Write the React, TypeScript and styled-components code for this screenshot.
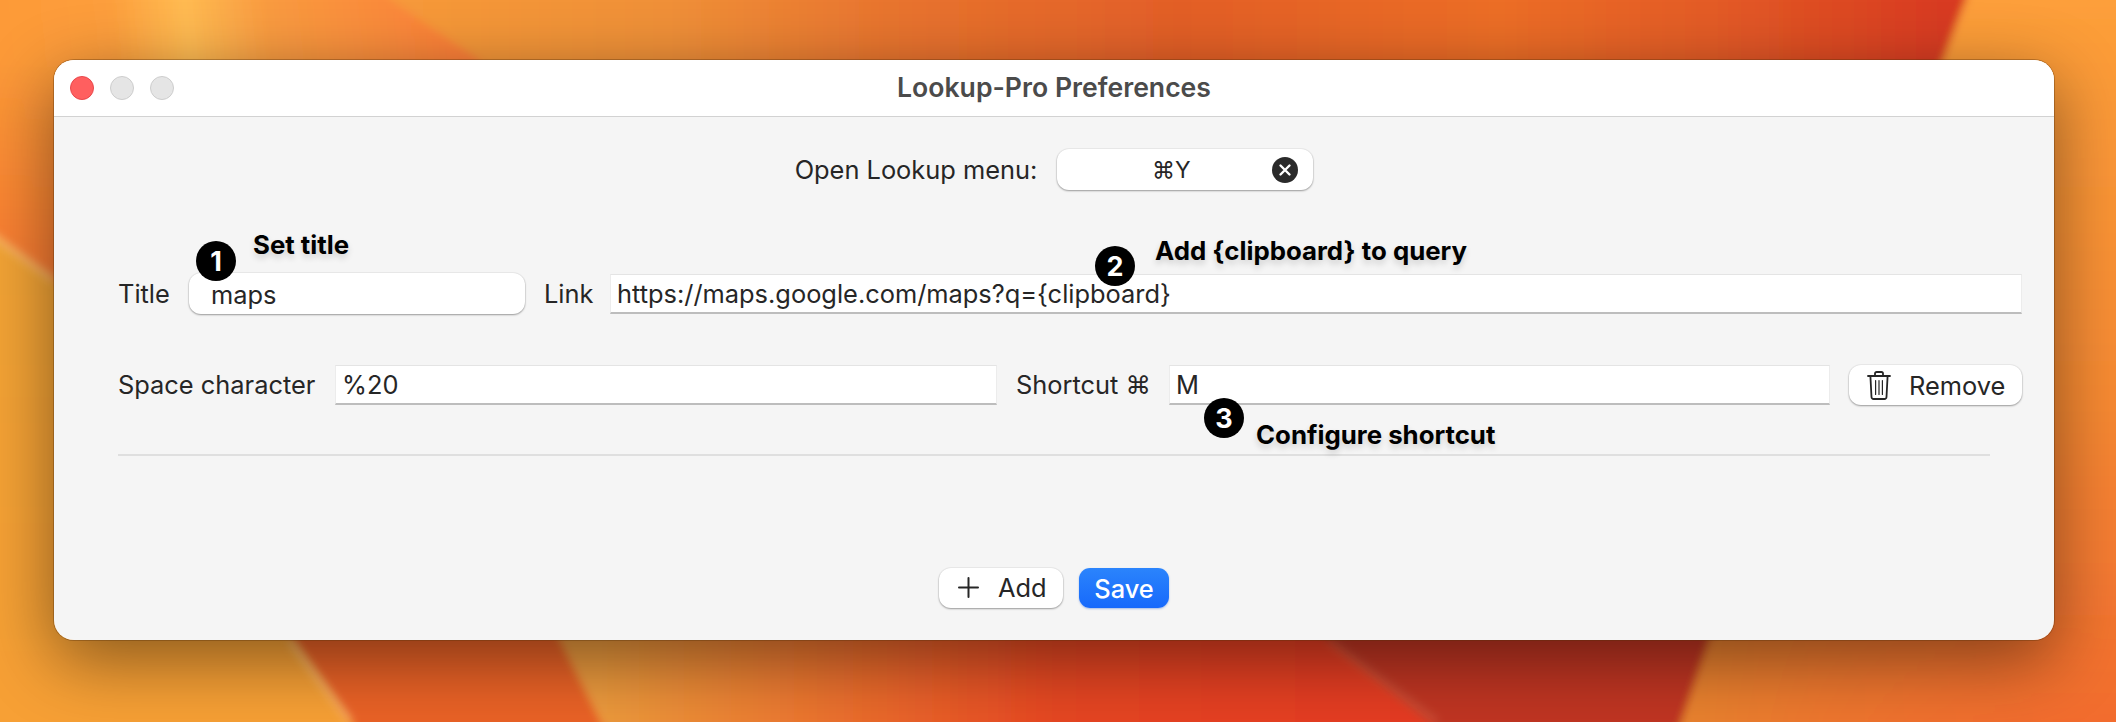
import styled, { createGlobalStyle } from "styled-components";

const GlobalStyle = createGlobalStyle`
  html, body {
    margin: 0;
    padding: 0;
    width: 2116px;
    height: 722px;
    overflow: hidden;
    font-family: Inter, "DejaVu Sans", sans-serif;
  }
  * {
    box-sizing: border-box;
  }
`;

const Page = styled.div`
  position: relative;
  width: 2116px;
  height: 722px;
  padding: 60px 62px 82px 54px;
  overflow: hidden;
  background-color: #f08030;
`;

const WallpaperArt = styled.svg`
  position: absolute;
  inset: 0;
  width: 2116px;
  height: 722px;
`;

const Window = styled.div`
  position: relative;
  display: flex;
  flex-direction: column;
  height: 580px;
  border-radius: 20px;
  overflow: hidden;
  background-color: #f5f5f5;
`;

const WindowShadow = styled.div`
  position: relative;
  border-radius: 20px;
  box-shadow: 0 0 0 1px rgba(90, 50, 10, 0.35), 0 20px 70px rgba(0, 0, 0, 0.46);
`;

const TitleBar = styled.header`
  position: relative;
  display: flex;
  align-items: center;
  justify-content: center;
  height: 57px;
  padding-bottom: 2px;
  flex-shrink: 0;
  background-color: #fff;
  border-bottom: 1px solid #d2d2d2;
`;

const Lights = styled.div`
  position: absolute;
  left: 16px;
  top: 16px;
  display: flex;
  gap: 16px;
`;

const Light = styled.span<{ $close?: boolean }>`
  width: 24px;
  height: 24px;
  border-radius: 50%;
  background-color: ${(p) => (p.$close ? "#ff5f5f" : "#e5e5e5")};
  border: 1px solid ${(p) => (p.$close ? "#e8484c" : "#cdcdcd")};
`;

const WindowTitle = styled.h1`
  margin: 0;
  font-size: 26.6px;
  font-weight: 600;
  color: #4b4b4b;
`;

const Content = styled.main`
  display: flex;
  flex-direction: column;
  flex: 1;
  padding: 32px 32px 32px 64px;
  color: #262626;
  font-size: 25.4px;
`;

const MenuRow = styled.div`
  display: flex;
  align-items: center;
  justify-content: center;
  gap: 20px;
  margin-left: -32px;
`;

const Label = styled.span`
  white-space: nowrap;
  line-height: 40px;
`;

const ShortcutBox = styled.div`
  position: relative;
  display: flex;
  align-items: center;
  justify-content: center;
  width: 256px;
  height: 41px;
  padding-right: 28px;
  background-color: #fff;
  border-radius: 12px;
  box-shadow: 0 1px 2px rgba(0, 0, 0, 0.35), 0 0 0 1px rgba(0, 0, 0, 0.04);
  font-size: 23px;
`;

const ClearIcon = styled.svg`
  position: absolute;
  right: 15px;
  top: 8px;
`;

const FormRow = styled.div<{ $cols: string; $top: number }>`
  display: grid;
  grid-template-columns: ${(p) => p.$cols};
  column-gap: 19px;
  align-items: center;
  margin-top: ${(p) => p.$top}px;
`;

const TitleField = styled.div`
  height: 41px;
  padding-left: 22px;
  line-height: 43px;
  background-color: #fff;
  border-radius: 12px;
  box-shadow: 0 1px 2px rgba(0, 0, 0, 0.35), 0 0 0 1px rgba(0, 0, 0, 0.04);
`;

const TextField = styled.div`
  height: 40px;
  padding-left: 6px;
  line-height: 38px;
  background-color: #fff;
  border: 1px solid #e4e4e4;
  border-bottom: 2px solid #bdbdbd;
  border-left-color: #ececec;
  border-right-color: #ececec;
  white-space: nowrap;
`;

const PlainButton = styled.button`
  display: flex;
  align-items: center;
  height: 40px;
  padding: 0;
  border: 0;
  background-color: #fff;
  border-radius: 12px;
  box-shadow: 0 1px 2px rgba(0, 0, 0, 0.35), 0 0 0 1px rgba(0, 0, 0, 0.04);
  color: #262626;
  font: inherit;
`;

const RemoveButton = styled(PlainButton)`
  gap: 18px;
  width: 173px;
  padding-left: 18px;
`;

const AddButton = styled(PlainButton)`
  gap: 19px;
  width: 124px;
  padding-left: 19px;
  padding-bottom: 2px;
`;

const SaveButton = styled.button`
  width: 90px;
  height: 40px;
  padding: 0;
  border: 0;
  border-radius: 11px;
  background: linear-gradient(#2b84fc, #1769fb);
  box-shadow: 0 1px 2px rgba(20, 80, 200, 0.35);
  color: #fff;
  font: inherit;
  font-weight: 500;
`;

const Divider = styled.hr`
  width: calc(100% - 32px);
  height: 2px;
  margin: 49px 0 0;
  border: 0;
  background-color: #dfdfdf;
`;

const Actions = styled.div`
  display: flex;
  justify-content: center;
  gap: 16px;
  margin-top: auto;
  margin-left: -32px;
`;

const Badge = styled.span<{ $x: number; $y: number }>`
  position: absolute;
  left: ${(p) => p.$x}px;
  top: ${(p) => p.$y}px;
  display: flex;
  align-items: center;
  justify-content: center;
  width: 40px;
  height: 40px;
  border-radius: 50%;
  background-color: #000;
  color: #fff;
  font-size: 27px;
  font-weight: 700;
`;

const Note = styled.span<{ $x: number; $y: number }>`
  position: absolute;
  left: ${(p) => p.$x}px;
  top: ${(p) => p.$y}px;
  line-height: 30px;
  color: #000;
  font-size: 25.800px;
  font-weight: 700;
  white-space: nowrap;
  text-shadow: 0 4px 6px rgba(0, 0, 0, 0.16);
`;

const notes = [
  { n: 1, text: "Set title", bx: 142, by: 181, x: 199, y: 170 },
  { n: 2, text: "Add {clipboard} to query", bx: 1041, by: 186, x: 1101, y: 176 },
  { n: 3, text: "Configure shortcut", bx: 1150, by: 338, x: 1202, y: 360 },
];

function Wallpaper() {
  return (
    <WallpaperArt viewBox="0 0 2116 722" aria-hidden="true">
      <defs>
        <linearGradient id="topBand" gradientUnits="userSpaceOnUse" x1="380" y1="0" x2="1980" y2="0">
          <stop offset="0" stopColor="#f79a3a" />
          <stop offset="0.18" stopColor="#f09038" />
          <stop offset="0.32" stopColor="#e8742e" />
          <stop offset="0.5" stopColor="#e35f28" />
          <stop offset="0.7" stopColor="#ec6e28" />
          <stop offset="0.84" stopColor="#e35a26" />
          <stop offset="0.98" stopColor="#d83a20" />
        </linearGradient>
        <linearGradient id="streak" gradientUnits="userSpaceOnUse" x1="0" y1="0" x2="480" y2="-50">
          <stop offset="0" stopColor="#fd9a38" />
          <stop offset="0.22" stopColor="#fd9e3c" />
          <stop offset="0.38" stopColor="#ffbb52" />
          <stop offset="0.55" stopColor="#f99b40" />
          <stop offset="0.8" stopColor="#fa8a3a" />
          <stop offset="1" stopColor="#ff7a38" />
        </linearGradient>
        <linearGradient id="leftFade" x1="0" y1="0" x2="0" y2="1">
          <stop offset="0" stopColor="#f77a30" stopOpacity="0" />
          <stop offset="1" stopColor="#f7752e" />
        </linearGradient>
        <linearGradient id="yellow" x1="0" y1="0" x2="0" y2="1">
          <stop offset="0" stopColor="#f2a436" />
          <stop offset="1" stopColor="#f8a035" />
        </linearGradient>
        <linearGradient id="emberBand" gradientUnits="userSpaceOnUse" x1="600" y1="0" x2="1437" y2="0">
          <stop offset="0" stopColor="#ec9a3c" />
          <stop offset="0.22" stopColor="#ec7a30" />
          <stop offset="0.55" stopColor="#e64622" />
          <stop offset="1" stopColor="#e53a20" />
        </linearGradient>
        <linearGradient id="rightSide" gradientUnits="userSpaceOnUse" x1="0" y1="0" x2="0" y2="722">
          <stop offset="0" stopColor="#fd9f3a" />
          <stop offset="0.55" stopColor="#f78a33" />
          <stop offset="1" stopColor="#f26c2e" />
        </linearGradient>
        <linearGradient id="rightBottom" gradientUnits="userSpaceOnUse" x1="1680" y1="0" x2="2116" y2="0">
          <stop offset="0" stopColor="#e8832f" />
          <stop offset="1" stopColor="#f26c2e" stopOpacity="0" />
        </linearGradient>
        <filter id="soft" x="-5%" y="-5%" width="110%" height="110%">
          <feGaussianBlur stdDeviation="4" />
        </filter>
        <filter id="glow" x="-20%" y="-20%" width="140%" height="140%">
          <feGaussianBlur stdDeviation="4" />
        </filter>
      </defs>
      <g filter="url(#soft)">
        <rect x="-20" y="-20" width="2160" height="770" fill="url(#topBand)" />
        <polygon points="-20,-20 380,-20 391,0 479,60 640,400 -20,400" fill="url(#streak)" />
        <rect x="-20" y="60" width="120" height="240" fill="url(#leftFade)" />
        <polygon points="1973,-20 2140,-20 2140,740 1670,740 1711,640 1943,60" fill="url(#rightSide)" />
        <polygon points="1711,620 2140,620 2140,740 1670,740" fill="url(#rightBottom)" />
        <polygon points="-20,226 54,280 200,400 278,620 351,722 362,740 -20,740" fill="url(#yellow)" />
        <polygon points="280,620 362,740 610,740 550,620" fill="#ea6226" />
        <polygon points="550,620 610,740 1450,740 1303,620" fill="url(#emberBand)" />
        <polygon points="1303,620 1450,740 1675,740 1716,620" fill="#c03620" />
      </g>
      <g filter="url(#glow)" fill="none" stroke="#ffd9a0" strokeOpacity="0.4" strokeWidth="7">
        <polyline points="-20,226 54,280" />
        <polyline points="290,640 351,722" />
        <polyline points="1329,640 1437,722" strokeOpacity="0.14" />
      </g>
    </WallpaperArt>
  );
}

function TrashIcon() {
  return (
    <svg width="24" height="29" viewBox="0 0 24 29" fill="none" stroke="#262626" strokeWidth="1.8" strokeLinecap="round" strokeLinejoin="round">
      <path d="M1 5h22" />
      <path d="M8 5V2.600C8 1.700 8.700 1 9.600 1h4.800c.9 0 1.600.7 1.600 1.600V5" />
      <path d="M3.400 5l1.100 21c.1 1.200 1 2 2.100 2h10.800c1.100 0 2-.8 2.100-2l1.100-21" />
      <path d="M8.600 9.500v14M12 9.500v14M15.400 9.500v14" strokeWidth="1.200" />
    </svg>
  );
}

function PlusIcon() {
  return (
    <svg width="21" height="21" viewBox="0 0 21 21" stroke="#262626" strokeWidth="2" strokeLinecap="round">
      <path d="M10.500 1v19M1 10.500h19" />
    </svg>
  );
}

export default function App() {
  return (
    <Page>
      <GlobalStyle />
      <Wallpaper />
      <WindowShadow>
        <Window>
          <TitleBar>
            <Lights>
              <Light $close />
              <Light />
              <Light />
            </Lights>
            <WindowTitle>Lookup-Pro Preferences</WindowTitle>
          </TitleBar>
          <Content>
            <MenuRow>
              <Label>Open Lookup menu:</Label>
              <ShortcutBox>
                ⌘Y
                <ClearIcon width="26" height="26" viewBox="0 0 26 26">
                  <circle cx="13" cy="13" r="13" fill="#2a2a2a" />
                  <path d="M8.500 8.500l9 9M17.500 8.500l-9 9" stroke="#fff" strokeWidth="2.400" strokeLinecap="round" />
                </ClearIcon>
              </ShortcutBox>
            </MenuRow>
            <FormRow $cols="52px 336px 47px 1fr" $top={83}>
              <Label>Title</Label>
              <TitleField>maps</TitleField>
              <Label>Link</Label>
              <TextField>https://maps.google.com/maps?q=&#123;clipboard&#125;</TextField>
            </FormRow>
            <FormRow $cols="198px 662px 134px 661px 173px" $top={51}>
              <Label>Space character</Label>
              <TextField>%20</TextField>
              <Label>Shortcut ⌘</Label>
              <TextField>M</TextField>
              <RemoveButton>
                <TrashIcon />
                Remove
              </RemoveButton>
            </FormRow>
            <Divider />
            <Actions>
              <AddButton>
                <PlusIcon />
                Add
              </AddButton>
              <SaveButton>Save</SaveButton>
            </Actions>
          </Content>
          {notes.map((note) => (
            <div key={note.n}>
              <Badge $x={note.bx} $y={note.by}>{note.n}</Badge>
              <Note $x={note.x} $y={note.y}>{note.text}</Note>
            </div>
          ))}
        </Window>
      </WindowShadow>
    </Page>
  );
}
